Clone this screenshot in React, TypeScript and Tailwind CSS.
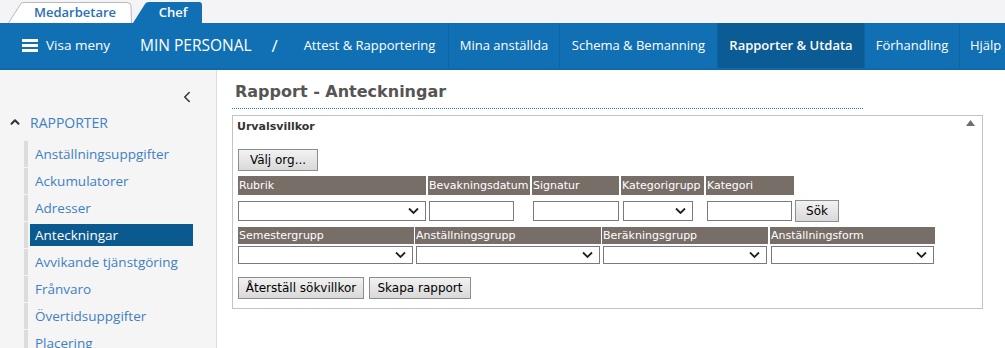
import { ChevronLeft, ChevronUp } from "lucide-react";

const ui = { fontFamily: '"Segoe UI", "Open Sans", sans-serif' };
const verdana = { fontFamily: 'Verdana, "DejaVu Sans", sans-serif' };

const navItems = [
  { label: "Attest & Rapportering", w: "w-[158px]" },
  { label: "Mina anställda", w: "w-[111px]" },
  { label: "Schema & Bemanning", w: "w-[158px]" },
  { label: "Rapporter & Utdata", w: "w-[147px]", active: true },
  { label: "Förhandling", w: "w-[95px]" },
];

const sideItems = [
  "Anställningsuppgifter",
  "Ackumulatorer",
  "Adresser",
  "Anteckningar",
  "Avvikande tjänstgöring",
  "Frånvaro",
  "Övertidsuppgifter",
  "Placering",
];

function Arrow() {
  return (
    <svg width="11" height="7" viewBox="0 0 11 7" className="absolute right-[6px] top-1/2 -translate-y-1/2">
      <path d="M1 1l4.5 4.5L10 1" fill="none" stroke="#222" strokeWidth="1.8" />
    </svg>
  );
}

function Select({ w, h = "h-[20px]" }: { w: string; h?: string }) {
  return <div className={`relative ${w} ${h} border border-[#7a7a7a] bg-white`}><Arrow /></div>;
}

function Input({ w }: { w: string }) {
  return <div className={`${w} h-[20px] border border-[#7a7a7a] bg-white`} />;
}

function Head({ w, children, h = "h-[19px]" }: { w: string; children: string; h?: string }) {
  return (
    <div className={`${w} ${h} bg-[#786e68] text-white text-[11px] leading-none flex items-center pl-[1px] whitespace-nowrap overflow-hidden`}>
      {children}
    </div>
  );
}

function Btn({ w, children, h = "h-[22px]" }: { w: string; children: string; h?: string }) {
  return (
    <div className={`${w} ${h} border border-[#8d8d8d] bg-gradient-to-b from-[#f2f2f2] to-[#d9d9d9] text-[12px] text-black flex items-center justify-center`}>
      {children}
    </div>
  );
}

export default function App() {
  return (
    <div className="w-[1005px] h-[348px] overflow-hidden bg-white" style={ui}>
      {/* tab strip */}
      <div className="h-[23px] bg-[#f4f4f6] flex items-end pl-[8px]">
        <div className="relative w-[124px] h-[21px]">
          <svg className="absolute inset-0" width="124" height="21" viewBox="0 0 124 21">
            <path d="M0.5 21 L13 1.5 Q14 0.5 16 0.5 L119 0.5 Q123 0.5 123 4 L123.5 21" fill="#fff" stroke="#b9b9b9" />
          </svg>
          <span className="relative flex h-full items-center justify-center pl-[10px] text-[13px] font-semibold text-[#2c6fb2]">Medarbetare</span>
        </div>
        <div className="relative w-[70px] h-[21px] ml-[1px]">
          <svg className="absolute inset-0" width="70" height="21" viewBox="0 0 70 21">
            <path d="M0 21 L12 2 Q13 0 16 0 L66 0 Q69 0 69 3 L69 21 Z" fill="#1170b4" />
          </svg>
          <span className="relative flex h-full items-center justify-center pl-[10px] text-[13px] font-semibold text-white">Chef</span>
        </div>
      </div>

      {/* nav bar */}
      <div className="h-[47px] bg-[#1170b4] border-b-2 border-[#0f68a7] flex items-stretch text-white text-[13px]">
        <div className="flex items-center pl-[22px] w-[124px] shrink-0">
          <svg width="16" height="13" viewBox="0 0 16 13" className="mr-[8px]">
            <rect y="0" width="16" height="3" fill="#fff" />
            <rect y="5" width="16" height="3" fill="#fff" />
            <rect y="10" width="16" height="3" fill="#fff" />
          </svg>
          <span className="whitespace-nowrap text-[13.5px]">Visa meny</span>
        </div>
        <div className="flex items-center pl-[16px] w-[167px] shrink-0 text-[15.5px] whitespace-nowrap">
          MIN PERSONAL
          <span className="ml-[20px] text-[17px]">/</span>
        </div>
        {navItems.map((n) => (
          <div
            key={n.label}
            className={`${n.w} shrink-0 flex items-center justify-center whitespace-nowrap border-r border-[#0e64a2] ${n.active ? "bg-[#0b5b95] font-semibold" : ""}`}
          >
            {n.label}
          </div>
        ))}
        <div className="flex-1 flex items-center pl-[10px] whitespace-nowrap">Hjälp</div>
      </div>

      <div className="flex">
        {/* sidebar */}
        <div className="w-[217px] h-[278px] shrink-0 bg-[#f5f5f5] border-r border-[#dedede]">
          <div className="flex justify-end pr-[20px] pt-[18px]">
            <ChevronLeft size={18} strokeWidth={2} className="text-[#333]" />
          </div>
          <div className="flex items-center pl-[8px] mt-[6px] h-[20px] text-[14px] text-[#3f7fc2]">
            <ChevronUp size={14} strokeWidth={3.5} className="text-[#333] mr-[8px]" />
            RAPPORTER
          </div>
          <div className="mt-[9px] pl-[24px] flex flex-col gap-[1px]">
            {sideItems.map((s) => (
              <div key={s} className="flex h-[26px] items-stretch">
                <div className="w-[4px] bg-[#dcdcdc]" />
                {s === "Anteckningar" ? (
                  <div className="ml-[2px] my-[2px] w-[163px] bg-[#0b5a8f] text-white text-[13.5px] flex items-center pl-[5px]">
                    {s}
                  </div>
                ) : (
                  <div className="ml-[7px] text-[13.5px] text-[#3f7fc2] flex items-center">{s}</div>
                )}
              </div>
            ))}
          </div>
        </div>

        {/* main */}
        <div className="pl-[15px] flex-1" style={verdana}>
          <div className="w-[631px] mt-[10px] pl-[3px] pb-[4px] border-b border-dotted border-[#2a7f9b] text-[16px] font-bold text-[#555]">
            Rapport - Anteckningar
          </div>
          <div className="relative mt-[6px] w-[751px] h-[194px] border border-[#c3c3c3] pl-[5px] pt-[3px]">
            <svg width="9" height="6" viewBox="0 0 9 6" className="absolute right-[7px] top-[4px]">
              <path d="M0 6 L4.5 0 L9 6 Z" fill="#6e6e6e" />
            </svg>
            <div className="-ml-[1px] text-[11px] font-bold text-[#333]">Urvalsvillkor</div>
            <div className="mt-[13px]">
              <Btn w="w-[80px]">Välj org...</Btn>
            </div>
            <div className="mt-[5px] flex">
              <Head w="w-[188px]">Rubrik</Head>
              <div className="ml-[2px]"><Head w="w-[102px]">Bevakningsdatum</Head></div>
              <div className="ml-[2px]"><Head w="w-[87px]">Signatur</Head></div>
              <div className="ml-[2px]"><Head w="w-[83px]">Kategorigrupp</Head></div>
              <div className="ml-[2px]"><Head w="w-[88px]">Kategori</Head></div>
            </div>
            <div className="mt-[5px] flex items-center">
              <Select w="w-[188px]" />
              <div className="ml-[3px]"><Input w="w-[85px]" /></div>
              <div className="ml-[19px]"><Input w="w-[86px]" /></div>
              <div className="ml-[4px]"><Select w="w-[70px]" /></div>
              <div className="ml-[14px]"><Input w="w-[85px]" /></div>
              <div className="ml-[3px]"><Btn w="w-[44px]">Sök</Btn></div>
            </div>
            <div className="mt-[5px] flex">
              <Head w="w-[176px]" h="h-[17px]">Semestergrupp</Head>
              <div className="ml-[1px]"><Head w="w-[186px]" h="h-[17px]">Anställningsgrupp</Head></div>
              <div className="ml-[1px]"><Head w="w-[166px]" h="h-[17px]">Beräkningsgrupp</Head></div>
              <div className="ml-[2px]"><Head w="w-[165px]" h="h-[17px]">Anställningsform</Head></div>
            </div>
            <div className="mt-[2px] flex">
              <Select w="w-[175px]" h="h-[18px]" />
              <div className="ml-[3px]"><Select w="w-[184px]" h="h-[18px]" /></div>
              <div className="ml-[3px]"><Select w="w-[164px]" h="h-[18px]" /></div>
              <div className="ml-[4px]"><Select w="w-[163px]" h="h-[18px]" /></div>
            </div>
            <div className="mt-[13px] flex">
              <Btn w="w-[126px]">Återställ sökvillkor</Btn>
              <div className="ml-[5px]"><Btn w="w-[102px]">Skapa rapport</Btn></div>
            </div>
          </div>
        </div>
      </div>
    </div>
  );
}
